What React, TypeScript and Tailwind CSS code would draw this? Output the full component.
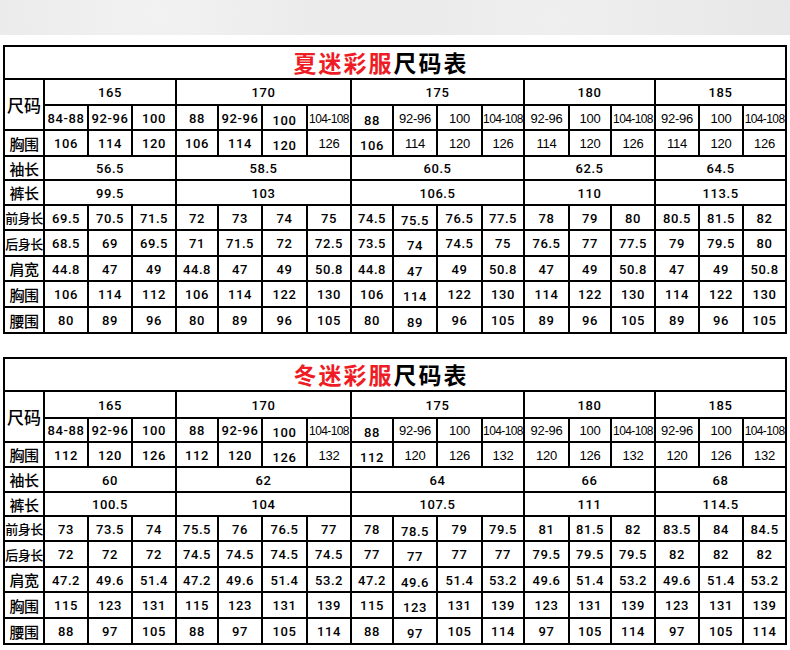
import React from 'react';

const groups = [
  { height: '165', span: 3 },
  { height: '170', span: 4 },
  { height: '175', span: 4 },
  { height: '180', span: 3 },
  { height: '185', span: 3 },
];

const colWidths = [40, 44, 44, 44, 42, 44, 45, 44, 42, 44, 45, 42, 45, 42, 44, 44, 44, 43];

interface Row {
  label: string;
  values: string[];
  merged?: boolean;
  narrow?: number[];
  low?: number[];
  labelSize?: string;
}

interface Chart {
  season: string;
  rowHeights: string[];
  rows: Row[];
}

const narrowHead = [6, 8, 9, 10, 11, 12, 13, 14, 15, 16];

const charts: Chart[] = [
  {
    season: '夏迷彩服',
    rowHeights: ['h-[33px]', 'h-[26px]', 'h-[25px]', 'h-[26px]', 'h-[24px]', 'h-[25px]', 'h-[25px]', 'h-[26px]', 'h-[25px]', 'h-[26px]', 'h-[26px]'],
    rows: [
      { label: '胸围', values: ['106', '114', '120', '106', '114', '120', '126', '106', '114', '120', '126', '114', '120', '126', '114', '120', '126'], narrow: [6, 8, 9, 10, 11, 12, 13, 14, 15, 16], low: [5, 7] },
      { label: '袖长', values: ['56.5', '58.5', '60.5', '62.5', '64.5'], merged: true },
      { label: '裤长', values: ['99.5', '103', '106.5', '110', '113.5'], merged: true },
      { label: '前身长', values: ['69.5', '70.5', '71.5', '72', '73', '74', '75', '74.5', '75.5', '76.5', '77.5', '78', '79', '80', '80.5', '81.5', '82'], low: [8], labelSize: 'text-[13px]' },
      { label: '后身长', values: ['68.5', '69', '69.5', '71', '71.5', '72', '72.5', '73.5', '74', '74.5', '75', '76.5', '77', '77.5', '79', '79.5', '80'], low: [8], labelSize: 'text-[13px]' },
      { label: '肩宽', values: ['44.8', '47', '49', '44.8', '47', '49', '50.8', '44.8', '47', '49', '50.8', '47', '49', '50.8', '47', '49', '50.8'], low: [8] },
      { label: '胸围', values: ['106', '114', '112', '106', '114', '122', '130', '106', '114', '122', '130', '114', '122', '130', '114', '122', '130'], low: [8] },
      { label: '腰围', values: ['80', '89', '96', '80', '89', '96', '105', '80', '89', '96', '105', '89', '96', '105', '89', '96', '105'], low: [8] },
    ],
  },
  {
    season: '冬迷彩服',
    rowHeights: ['h-[33px]', 'h-[27px]', 'h-[24px]', 'h-[25px]', 'h-[25px]', 'h-[24px]', 'h-[25px]', 'h-[26px]', 'h-[25px]', 'h-[26px]', 'h-[26px]'],
    rows: [
      { label: '胸围', values: ['112', '120', '126', '112', '120', '126', '132', '112', '120', '126', '132', '120', '126', '132', '120', '126', '132'], narrow: [6, 8, 9, 10, 11, 12, 13, 14, 15, 16], low: [5, 7] },
      { label: '袖长', values: ['60', '62', '64', '66', '68'], merged: true },
      { label: '裤长', values: ['100.5', '104', '107.5', '111', '114.5'], merged: true },
      { label: '前身长', values: ['73', '73.5', '74', '75.5', '76', '76.5', '77', '78', '78.5', '79', '79.5', '81', '81.5', '82', '83.5', '84', '84.5'], low: [8], labelSize: 'text-[13px]' },
      { label: '后身长', values: ['72', '72', '72', '74.5', '74.5', '74.5', '74.5', '77', '77', '77', '77', '79.5', '79.5', '79.5', '82', '82', '82'], low: [8], labelSize: 'text-[13px]' },
      { label: '肩宽', values: ['47.2', '49.6', '51.4', '47.2', '49.6', '51.4', '53.2', '47.2', '49.6', '51.4', '53.2', '49.6', '51.4', '53.2', '49.6', '51.4', '53.2'], low: [8] },
      { label: '胸围', values: ['115', '123', '131', '115', '123', '131', '139', '115', '123', '131', '139', '123', '131', '139', '123', '131', '139'], low: [8] },
      { label: '腰围', values: ['88', '97', '105', '88', '97', '105', '114', '88', '97', '105', '114', '97', '105', '114', '97', '105', '114'], low: [8] },
    ],
  },
];

const chestSizes = ['84-88', '92-96', '100', '88', '92-96', '100', '104-108', '88', '92-96', '100', '104-108', '92-96', '100', '104-108', '92-96', '100', '104-108'];

const cell = 'border-2 border-black p-0 text-center align-middle leading-none';
const wide = "font-['Roboto',sans-serif] font-medium text-[13px] tracking-[0.6px]";
const slim = "font-['Liberation_Sans',sans-serif] font-normal text-[13px] tracking-[-0.2px]";
const slimmest = "font-['Liberation_Sans',sans-serif] font-normal text-[12px] tracking-[-0.6px]";

const Value = ({ text, narrow, low }: { text: string; narrow?: boolean; low?: boolean }) => {
  const face = !narrow ? wide : text.length > 5 ? slimmest : slim;
  return <span className={`${face} ${low ? 'relative top-[2px]' : ''} inline-block whitespace-nowrap`}>{text}</span>;
};

const SizeChart = ({ chart }: { chart: Chart }) => {
  const h = chart.rowHeights;
  return (
    <table className="table-fixed border-collapse w-[784px] ml-[3px] text-black">
      <colgroup>
        {colWidths.map((w, i) => (
          <col key={i} style={{ width: w }} />
        ))}
      </colgroup>
      <tbody>
        <tr className={h[0]}>
          <td colSpan={18} className={cell}>
            <span className="relative right-[14px] text-[23px] font-bold tracking-[2px] font-['Noto_Sans_CJK_SC',sans-serif]">
              <span className="text-[#ee1c24]">{chart.season}</span>
              <span>尺码表</span>
            </span>
          </td>
        </tr>
        <tr className={h[1]}>
          <td rowSpan={2} className={`${cell} text-[17px] font-medium font-['Noto_Sans_CJK_SC',sans-serif]`}>尺码</td>
          {groups.map((g) => (
            <td key={g.height} colSpan={g.span} className={cell}>
              <Value text={g.height} />
            </td>
          ))}
        </tr>
        <tr className={h[2]}>
          {chestSizes.map((s, i) => (
            <td key={i} className={cell}>
              <Value text={s} narrow={narrowHead.includes(i)} low={i === 5 || i === 7} />
            </td>
          ))}
        </tr>
        {chart.rows.map((row, r) => (
          <tr key={r} className={h[r + 3]}>
            <td className={`${cell} ${row.labelSize ?? 'text-[15px]'} font-medium tracking-[-0.5px] font-['Noto_Sans_CJK_SC',sans-serif]`}>
              {row.label}
            </td>
            {row.merged
              ? row.values.map((v, i) => (
                  <td key={i} colSpan={groups[i].span} className={cell}>
                    <Value text={v} />
                  </td>
                ))
              : row.values.map((v, i) => (
                  <td key={i} className={cell}>
                    <Value text={v} narrow={row.narrow?.includes(i)} low={row.low?.includes(i)} />
                  </td>
                ))}
          </tr>
        ))}
      </tbody>
    </table>
  );
};

export default function App() {
  return (
    <div className="w-[790px] h-[650px] overflow-hidden bg-white font-['Liberation_Sans','Noto_Sans_CJK_SC',sans-serif]">
      <div className="h-[35px] bg-[#e7e7e7] bg-[radial-gradient(circle_at_20%_40%,#f2f2f2_0,transparent_40%),radial-gradient(circle_at_70%_60%,#efefef_0,transparent_45%)]" />
      <div className="pt-[10px] flex flex-col gap-[23px]">
        {charts.map((c) => (
          <SizeChart key={c.season} chart={c} />
        ))}
      </div>
    </div>
  );
}
